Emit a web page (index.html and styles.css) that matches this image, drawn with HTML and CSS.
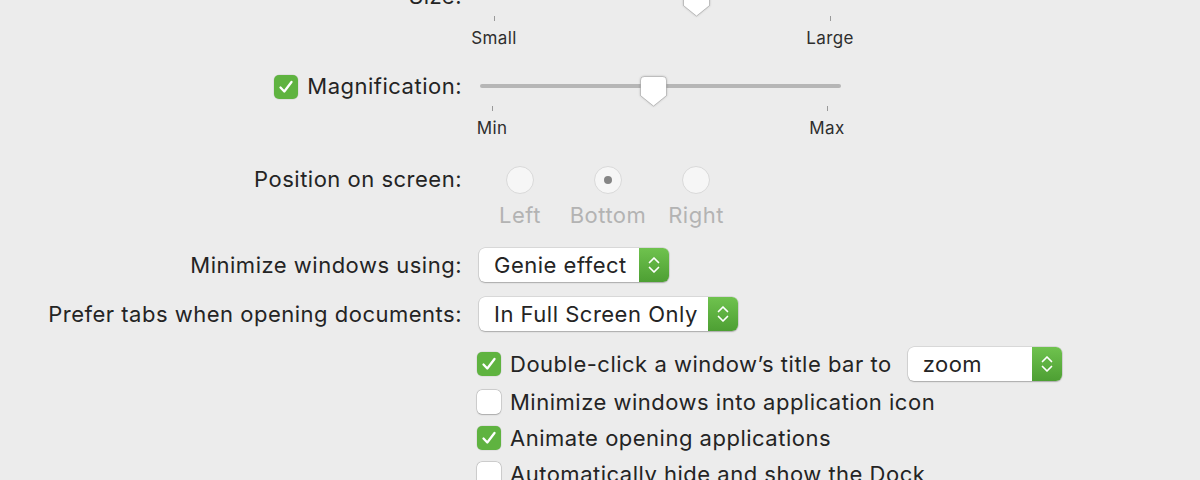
FILE: index.html
```html
<!DOCTYPE html>
<html lang="en">
<head>
<meta charset="utf-8">
<title>Dock</title>
<link rel="stylesheet" href="styles.css">
</head>
<body>
<div class="prefs">
  <div class="row row-size">
    <div class="label label-slider">Size:</div>
    <div class="slider">
      <div class="rail">
        <div class="track"></div>
        <svg class="thumb thumb-size" width="27" height="31" viewBox="0 0 27 31"><path d="M4.5 0.5H22.5Q26.5 0.5 26.5 4.5V19.5L13.5 30L0.5 19.5V4.5Q0.5 0.5 4.5 0.5Z" fill="#fff" stroke="rgba(0,0,0,0.18)"/></svg>
      </div>
      <div class="scale">
        <div class="mark"><span class="tick"></span><span class="mark-label">Small</span></div>
        <div class="mark"><span class="tick"></span><span class="mark-label">Large</span></div>
      </div>
    </div>
  </div>

  <div class="row row-mag">
    <div class="label label-slider">
      <span class="check on"><svg width="24" height="24" viewBox="0 0 24 24"><path d="M6.5 12.5L10.3 16.5L17.5 7" fill="none" stroke="#fff" stroke-width="2.3" stroke-linecap="round" stroke-linejoin="round"/></svg></span>
      <span>Magnification:</span>
    </div>
    <div class="slider">
      <div class="rail">
        <div class="track"></div>
        <svg class="thumb thumb-mag" width="27" height="31" viewBox="0 0 27 31"><path d="M4.5 0.5H22.5Q26.5 0.5 26.5 4.5V19.5L13.5 30L0.5 19.5V4.5Q0.5 0.5 4.5 0.5Z" fill="#fff" stroke="rgba(0,0,0,0.18)"/></svg>
      </div>
      <div class="scale">
        <div class="mark"><span class="tick"></span><span class="mark-label">Min</span></div>
        <div class="mark"><span class="tick"></span><span class="mark-label">Max</span></div>
      </div>
    </div>
  </div>

  <div class="row row-position">
    <div class="label label-radio">Position on screen:</div>
    <div class="radios">
      <div class="radio-item"><span class="radio"></span><span class="radio-label">Left</span></div>
      <div class="radio-item"><span class="radio selected"></span><span class="radio-label">Bottom</span></div>
      <div class="radio-item"><span class="radio"></span><span class="radio-label">Right</span></div>
    </div>
  </div>

  <div class="row row-minimize">
    <div class="label">Minimize windows using:</div>
    <div class="popup popup-genie">
      <span class="popup-text">Genie effect</span>
      <span class="stepper"><svg width="14" height="24" viewBox="0 0 14 24"><path d="M2.5 9.5L7 5L11.5 9.5M2.5 14.5L7 19L11.5 14.5" fill="none" stroke="#fff" stroke-width="1.7" stroke-linecap="round" stroke-linejoin="round"/></svg></span>
    </div>
  </div>

  <div class="row row-prefer">
    <div class="label">Prefer tabs when opening documents:</div>
    <div class="popup popup-tabs">
      <span class="popup-text">In Full Screen Only</span>
      <span class="stepper"><svg width="14" height="24" viewBox="0 0 14 24"><path d="M2.5 9.5L7 5L11.5 9.5M2.5 14.5L7 19L11.5 14.5" fill="none" stroke="#fff" stroke-width="1.7" stroke-linecap="round" stroke-linejoin="round"/></svg></span>
    </div>
  </div>

  <div class="row row-checks">
    <div class="label"></div>
    <div class="checks">
      <div class="check-row check-row-popup">
        <span class="check on"><svg width="24" height="24" viewBox="0 0 24 24"><path d="M6.5 12.5L10.3 16.5L17.5 7" fill="none" stroke="#fff" stroke-width="2.3" stroke-linecap="round" stroke-linejoin="round"/></svg></span>
        <span class="check-text">Double-click a window’s title bar to</span>
        <div class="popup popup-zoom">
          <span class="popup-text">zoom</span>
          <span class="stepper"><svg width="14" height="24" viewBox="0 0 14 24"><path d="M2.5 9.5L7 5L11.5 9.5M2.5 14.5L7 19L11.5 14.5" fill="none" stroke="#fff" stroke-width="1.7" stroke-linecap="round" stroke-linejoin="round"/></svg></span>
        </div>
      </div>
      <div class="check-row">
        <span class="check"></span>
        <span class="check-text">Minimize windows into application icon</span>
      </div>
      <div class="check-row">
        <span class="check on"><svg width="24" height="24" viewBox="0 0 24 24"><path d="M6.5 12.5L10.3 16.5L17.5 7" fill="none" stroke="#fff" stroke-width="2.3" stroke-linecap="round" stroke-linejoin="round"/></svg></span>
        <span class="check-text">Animate opening applications</span>
      </div>
      <div class="check-row">
        <span class="check"></span>
        <span class="check-text">Automatically hide and show the Dock</span>
      </div>
    </div>
  </div>
</div>
</body>
</html>
```

FILE: styles.css
```css
html, body {
  margin: 0;
  padding: 0;
  background: #ececec;
  overflow: hidden;
}

body {
  width: 1200px;
  height: 480px;
  font-family: "Inter", "Noto Sans", "Liberation Sans", sans-serif;
  font-size: 22px;
  letter-spacing: 0.5px;
  color: #242424;
}

.prefs {
  margin-top: -14px;
}

.row {
  display: grid;
  grid-template-columns: 462px auto;
  column-gap: 17px;
  align-items: start;
}

.label {
  display: flex;
  justify-content: flex-end;
  align-items: center;
  white-space: nowrap;
  height: 34px;
  line-height: 34px;
}

.label-slider {
  height: 21px;
  line-height: 21px;
  gap: 9px;
}

.label-radio {
  height: 26px;
  line-height: 26px;
}

.row-mag { margin-top: 28px; }
.row-position { margin-top: 28px; }
.row-minimize { margin-top: 21px; }
.row-prefer { margin-top: 15px; }
.row-checks { margin-top: 16px; }

/* slider */
.slider {
  width: 362px;
}

.rail {
  position: relative;
  height: 30px;
}

.track {
  position: absolute;
  left: 1px;
  right: 0;
  top: 8px;
  height: 4px;
  border-radius: 2px;
  background: #b6b6b6;
}

.thumb {
  position: absolute;
  top: 0;
  filter: drop-shadow(0 0.5px 1px rgba(0,0,0,0.25));
}

.thumb-size { left: 204px; }
.thumb-mag { left: 161px; }

.scale {
  display: flex;
  justify-content: space-between;
  padding: 0 14px 0 13px;
}

.row-size .scale {
  padding: 0 11px 0 15px;
}

.mark {
  width: 0;
  display: flex;
  flex-direction: column;
  align-items: center;
}

.tick {
  width: 1px;
  height: 5px;
  background: #999;
  flex: none;
}

.mark-label {
  margin-top: 7px;
  font-size: 17px;
  letter-spacing: 0.4px;
  line-height: 20px;
  white-space: nowrap;
  color: #2e2e2e;
}

/* radios */
.radios {
  display: grid;
  grid-template-columns: repeat(3, 88px);
  margin-left: -3px;
}

.radio-item {
  display: flex;
  flex-direction: column;
  align-items: center;
}

.radio {
  width: 28px;
  height: 28px;
  box-sizing: border-box;
  border-radius: 50%;
  background: #f6f6f6;
  border: 1px solid #d9d9d9;
  display: flex;
  align-items: center;
  justify-content: center;
}

.radio.selected::after {
  content: "";
  width: 8px;
  height: 8px;
  border-radius: 50%;
  background: #858585;
}

.radio-label {
  margin-top: 9px;
  line-height: 24px;
  color: #b3b3b3;
  white-space: nowrap;
}

/* popup buttons */
.popup {
  height: 34px;
  box-sizing: border-box;
  display: flex;
  align-items: stretch;
  background: #fff;
  border-radius: 6px;
  box-shadow: 0 0 0 0.5px rgba(0,0,0,0.16), 0 1px 1.5px rgba(0,0,0,0.22);
  overflow: hidden;
}

.popup-text {
  flex: 1;
  padding-left: 15px;
  line-height: 34px;
  white-space: nowrap;
}

.stepper {
  width: 30px;
  flex: none;
  display: flex;
  align-items: center;
  justify-content: center;
  background: linear-gradient(#6fc24e, #4d9f33);
}

.popup-genie { width: 190px; }
.popup-tabs { width: 259px; }
.popup-zoom { width: 154px; margin-left: 7px; }

/* checkboxes */
.checks {
  margin-left: -2px;
}

.check-row {
  display: flex;
  align-items: center;
  height: 36px;
  gap: 9px;
  white-space: nowrap;
}

.check-row-popup {
  height: 34px;
  margin-bottom: 3px;
}

.check {
  width: 24px;
  height: 24px;
  box-sizing: border-box;
  border-radius: 5px;
  flex: none;
  background: #fff;
  box-shadow: 0 0 0 0.5px rgba(0,0,0,0.2), 0 0.5px 1.5px rgba(0,0,0,0.2);
  display: inline-flex;
}

.check.on {
  background: #5fb340;
  box-shadow: 0 0 0 0.5px rgba(0,0,0,0.1);
}
```
